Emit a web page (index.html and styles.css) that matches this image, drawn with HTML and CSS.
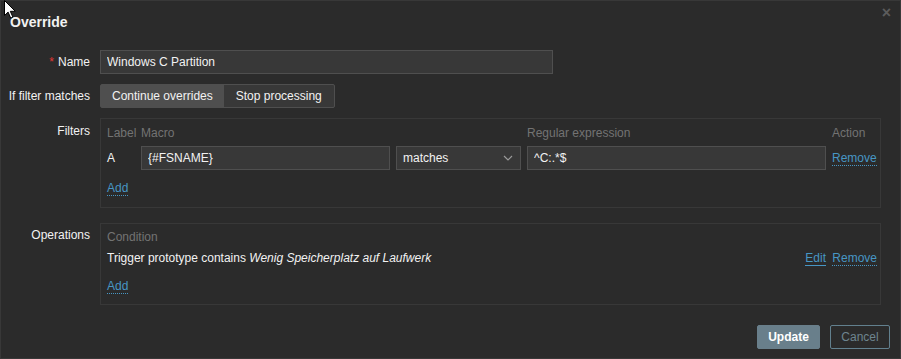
FILE: index.html
```html
<!DOCTYPE html>
<html lang="en">
<head>
    <meta charset="UTF-8">
    <title>Override</title>
    <link rel="stylesheet" href="styles.css">
</head>
<body>

    <div class="dialog">
        <div class="dialog-head">
            <h4>Override</h4>
            <button class="btn-close" title="Close">&times;</button>
        </div>

        <div class="form">
            <label class="form-label"><span class="required">*</span> Name</label>
            <div class="form-field">
                <input class="text-input name-input" type="text" value="Windows C Partition">
            </div>

            <label class="form-label">If filter matches</label>
            <div class="form-field">
                <div class="radio-seg">
                    <span class="seg on">Continue overrides</span>
                    <span class="seg">Stop processing</span>
                </div>
            </div>

            <label class="form-label label-top">Filters</label>
            <div class="form-field">
                <div class="box">
                    <div class="filter-grid">
                        <span class="col-head">Label</span>
                        <span class="col-head">Macro</span>
                        <span class="col-head"></span>
                        <span class="col-head">Regular expression</span>
                        <span class="col-head">Action</span>

                        <span class="cell">A</span>
                        <input class="text-input" type="text" value="{#FSNAME}">
                        <div class="select">
                            <span>matches</span>
                            <svg width="10" height="6" viewBox="0 0 10 6"><path d="M1 1l4 4 4-4" fill="none" stroke="#9a9a9a" stroke-width="1.2"/></svg>
                        </div>
                        <input class="text-input" type="text" value="^C:.*$">
                        <span class="cell"><a class="link-dotted" href="#">Remove</a></span>
                    </div>
                    <div class="add-row"><a class="link-dotted" href="#">Add</a></div>
                </div>
            </div>

            <label class="form-label label-top ops-label">Operations</label>
            <div class="form-field ops-field">
                <div class="box ops-box">
                    <div class="col-head">Condition</div>
                    <div class="ops-row">
                        <span>Trigger prototype contains <em>Wenig Speicherplatz auf Laufwerk</em></span>
                        <span class="actions">
                            <a class="link-solid" href="#">Edit</a>
                            <a class="link-dotted" href="#">Remove</a>
                        </span>
                    </div>
                    <div class="add-row"><a class="link-dotted" href="#">Add</a></div>
                </div>
            </div>
        </div>

        <div class="dialog-foot">
            <button class="btn btn-update">Update</button>
            <button class="btn btn-cancel">Cancel</button>
        </div>
    </div>

    <!-- mouse pointer seen in the screenshot -->
    <svg class="cursor" width="12" height="19" viewBox="0 0 12 19">
        <path d="M0.5 0.5v15l3.6-3.4 2.6 6 2.2-1-2.6-5.8h5z" fill="#fff" stroke="#000" stroke-width="1"/>
    </svg>

</body>
</html>
```

FILE: styles.css
```css
body {
    margin: 0;
    background-color: #2b2b2b;
    font-family: 'Liberation Sans', Arial, sans-serif;
    font-size: 12px;
    color: #f2f2f2;
}

.dialog {
    position: relative;
    width: 899px;
    height: 357px;
    border: 1px solid #383838;
    border-right-color: #3a3a3a;
    background-color: #2b2b2b;
}

.dialog-head {
    height: 40px;
    padding: 0 9px;
    display: flex;
    align-items: center;
    justify-content: space-between;
}

.dialog-head h4 {
    margin: 0;
    font-size: 14px;
    font-weight: bold;
    color: #f2f2f2;
    padding-top: 2px;
}

.btn-close {
    background: none;
    border: none;
    padding: 0;
    margin-top: -16px;
    margin-right: 0;
    color: #5c5c5c;
    font-size: 16px;
    font-weight: bold;
    font-family: 'Liberation Sans', Arial, sans-serif;
    cursor: pointer;
}

/* label / field grid */
.form {
    display: grid;
    grid-template-columns: 89px 781px;
    column-gap: 10px;
    row-gap: 10px;
    margin-top: 9px;
}

.form-label {
    display: flex;
    align-items: center;
    justify-content: flex-end;
    color: #f2f2f2;
    white-space: nowrap;
}

.label-top {
    align-items: flex-start;
    padding-top: 6px;
}

.ops-label {
    padding-top: 10px;
}

.ops-field {
    padding-top: 5px;
}

.required {
    color: #e33734;
    margin-right: 4px;
}

.text-input {
    box-sizing: border-box;
    height: 24px;
    padding: 0 6px;
    background-color: #383838;
    border: 1px solid #4f4f4f;
    color: #f2f2f2;
    font-family: 'Liberation Sans', Arial, sans-serif;
    font-size: 12px;
    outline: none;
}

.name-input {
    width: 453px;
}

.radio-seg {
    display: inline-flex;
    height: 24px;
    border: 1px solid #4f4f4f;
    border-radius: 2px;
    box-sizing: border-box;
    background-color: #383838;
}

.seg {
    display: flex;
    align-items: center;
    padding: 0 12px;
}

.seg.on {
    padding: 0 11px;
    background-color: #4f4f4f;
}

.box {
    box-sizing: border-box;
    width: 781px;
    border: 1px solid #383838;
    padding: 5px 6px 10px 6px;
}

.filter-grid {
    display: grid;
    grid-template-columns: 28px 249px 125px 299px auto;
    column-gap: 6px;
    row-gap: 4px;
    align-items: center;
}

.col-head {
    color: #737373;
    line-height: 18px;
}

.cell {
    line-height: 24px;
}

.select {
    box-sizing: border-box;
    height: 24px;
    display: flex;
    align-items: center;
    justify-content: space-between;
    padding: 0 7px 0 6px;
    border: 1px solid #4f4f4f;
    background-color: #383838;
}

.add-row {
    margin-top: 9px;
    line-height: 18px;
}

a {
    color: #4796c4;
    text-decoration: none;
}

.link-dotted {
    border-bottom: 1px dotted #4796c4;
}

.link-solid {
    border-bottom: 1px solid #4796c4;
}

.ops-box {
    padding: 4px 3px 9px 6px;
}

.ops-row {
    display: flex;
    justify-content: space-between;
    align-items: center;
    line-height: 18px;
    margin-top: 3px;
}

.ops-row em {
    font-style: italic;
}

.actions a {
    margin-left: 3px;
}

.ops-box .add-row {
    margin-top: 10px;
}

.dialog-foot {
    display: flex;
    justify-content: flex-end;
    gap: 10px;
    padding: 20px 10px 0 0;
}

.btn {
    box-sizing: border-box;
    height: 24px;
    padding: 0 10px;
    border-radius: 2px;
    font-family: 'Liberation Sans', Arial, sans-serif;
    font-size: 12px;
    cursor: pointer;
}

.btn-update {
    background-color: #697f8b;
    border: 1px solid #697f8b;
    color: #ffffff;
    font-weight: bold;
    width: 63px;
}

.btn-cancel {
    background-color: transparent;
    border: 1px solid #62808e;
    color: #6e858f;
    width: 60px;
}

.cursor {
    position: absolute;
    top: 0;
    left: 4px;
}
```
